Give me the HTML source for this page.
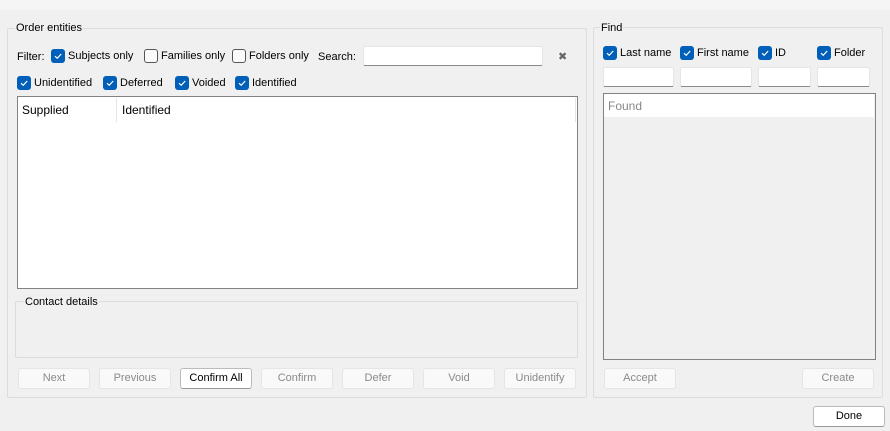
<!DOCTYPE html>
<html><head><meta charset="utf-8"><style>
*{box-sizing:border-box;margin:0;padding:0}
body{width:890px;height:431px;background:#f0f0f0;font-family:"Liberation Sans",sans-serif;font-size:11px;color:#000;position:relative;overflow:hidden}
.a{position:absolute}
.top{left:0;top:0;width:890px;height:10px;background:#f5f5f5}
.grp{position:absolute;border:1px solid #dcdcdc;border-radius:2px}
.ttl{position:absolute;background:#f0f0f0;padding:0 1px;line-height:14px}
.cb{position:absolute;width:14px;height:14px;border-radius:3px;background:#005fb8}
.cb svg{position:absolute;left:2px;top:2px}
.ucb{position:absolute;width:14px;height:14px;border-radius:3px;border:1px solid #555;background:#fbfbfb}
.t{position:absolute;line-height:14px;white-space:nowrap}
.inp{position:absolute;background:#fff;border:1px solid #e5e5e5;border-bottom:1px solid #8a8a8a;border-radius:2px}
.btn{position:absolute;height:21px;border:1px solid #e5e5e5;border-radius:3px;background:#f9f9f9;color:#8a8a8a;text-align:center;line-height:19px}
.btn.on{color:#000;background:#fff;border-color:#bbb;border-bottom-color:#999}
</style></head><body>
<div class="a top"></div>

<div class="grp" style="left:7px;top:28px;width:580px;height:370px"></div>
<div class="ttl" style="left:15px;top:21px">Order entities</div>

<div class="t" style="left:17px;top:50px">Filter:</div>
<div class="cb" style="left:51px;top:49px"><svg width="10" height="10"><path d="M2 5.2 L4.2 7.3 L8.2 3" stroke="#fff" stroke-width="1.2" fill="none"/></svg></div>
<div class="t" style="left:68px;top:49px">Subjects only</div>
<div class="ucb" style="left:144px;top:49px"></div>
<div class="t" style="left:161px;top:49px">Families only</div>
<div class="ucb" style="left:232px;top:49px"></div>
<div class="t" style="left:249px;top:49px">Folders only</div>
<div class="t" style="left:318px;top:50px">Search:</div>
<div class="inp" style="left:363px;top:46px;width:180px;height:20px"></div>
<div class="t" style="left:558px;top:50px;color:#666;font-size:11px">✖</div>

<div class="cb" style="left:17px;top:76px"><svg width="10" height="10"><path d="M2 5.2 L4.2 7.3 L8.2 3" stroke="#fff" stroke-width="1.2" fill="none"/></svg></div>
<div class="t" style="left:34px;top:76px">Unidentified</div>
<div class="cb" style="left:103px;top:76px"><svg width="10" height="10"><path d="M2 5.2 L4.2 7.3 L8.2 3" stroke="#fff" stroke-width="1.2" fill="none"/></svg></div>
<div class="t" style="left:120px;top:76px">Deferred</div>
<div class="cb" style="left:175px;top:76px"><svg width="10" height="10"><path d="M2 5.2 L4.2 7.3 L8.2 3" stroke="#fff" stroke-width="1.2" fill="none"/></svg></div>
<div class="t" style="left:192px;top:76px">Voided</div>
<div class="cb" style="left:235px;top:76px"><svg width="10" height="10"><path d="M2 5.2 L4.2 7.3 L8.2 3" stroke="#fff" stroke-width="1.2" fill="none"/></svg></div>
<div class="t" style="left:252px;top:76px">Identified</div>

<div class="a" style="left:17px;top:96px;width:561px;height:193px;background:#fff;border:1px solid #828282"></div>
<div class="a" style="left:116px;top:98px;width:1px;height:24px;background:#e5e5e5"></div>
<div class="a" style="left:575px;top:98px;width:1px;height:24px;background:#e5e5e5"></div>
<div class="t" style="left:22px;top:103px;font-size:12px">Supplied</div>
<div class="t" style="left:122px;top:103px;font-size:12px">Identified</div>

<div class="grp" style="left:15px;top:301px;width:563px;height:57px"></div>
<div class="ttl" style="left:24px;top:295px">Contact details</div>

<div class="btn" style="left:18px;top:368px;width:72px">Next</div>
<div class="btn" style="left:99px;top:368px;width:72px">Previous</div>
<div class="btn on" style="left:180px;top:368px;width:72px">Confirm All</div>
<div class="btn" style="left:261px;top:368px;width:72px">Confirm</div>
<div class="btn" style="left:342px;top:368px;width:72px">Defer</div>
<div class="btn" style="left:423px;top:368px;width:72px">Void</div>
<div class="btn" style="left:504px;top:368px;width:72px">Unidentify</div>

<div class="grp" style="left:593px;top:27px;width:290px;height:371px"></div>
<div class="ttl" style="left:600px;top:21px">Find</div>

<div class="cb" style="left:603px;top:46px"><svg width="10" height="10"><path d="M2 5.2 L4.2 7.3 L8.2 3" stroke="#fff" stroke-width="1.2" fill="none"/></svg></div>
<div class="t" style="left:620px;top:46px">Last name</div>
<div class="cb" style="left:680px;top:46px"><svg width="10" height="10"><path d="M2 5.2 L4.2 7.3 L8.2 3" stroke="#fff" stroke-width="1.2" fill="none"/></svg></div>
<div class="t" style="left:697px;top:46px">First name</div>
<div class="cb" style="left:758px;top:46px"><svg width="10" height="10"><path d="M2 5.2 L4.2 7.3 L8.2 3" stroke="#fff" stroke-width="1.2" fill="none"/></svg></div>
<div class="t" style="left:775px;top:46px">ID</div>
<div class="cb" style="left:817px;top:46px"><svg width="10" height="10"><path d="M2 5.2 L4.2 7.3 L8.2 3" stroke="#fff" stroke-width="1.2" fill="none"/></svg></div>
<div class="t" style="left:834px;top:46px">Folder</div>

<div class="inp" style="left:603px;top:67px;width:71px;height:20px"></div>
<div class="inp" style="left:680px;top:67px;width:72px;height:20px"></div>
<div class="inp" style="left:758px;top:67px;width:53px;height:20px"></div>
<div class="inp" style="left:817px;top:67px;width:53px;height:20px"></div>

<div class="a" style="left:603px;top:93px;width:273px;height:267px;background:#f0f0f0;border:1px solid #828282"></div>
<div class="a" style="left:604px;top:94px;width:270px;height:23px;background:#fff"></div>
<div class="t" style="left:608px;top:99px;color:#888;font-size:12px">Found</div>

<div class="btn" style="left:604px;top:368px;width:72px">Accept</div>
<div class="btn" style="left:802px;top:368px;width:72px">Create</div>

<div class="btn on" style="left:813px;top:406px;width:72px">Done</div>
</body></html>
